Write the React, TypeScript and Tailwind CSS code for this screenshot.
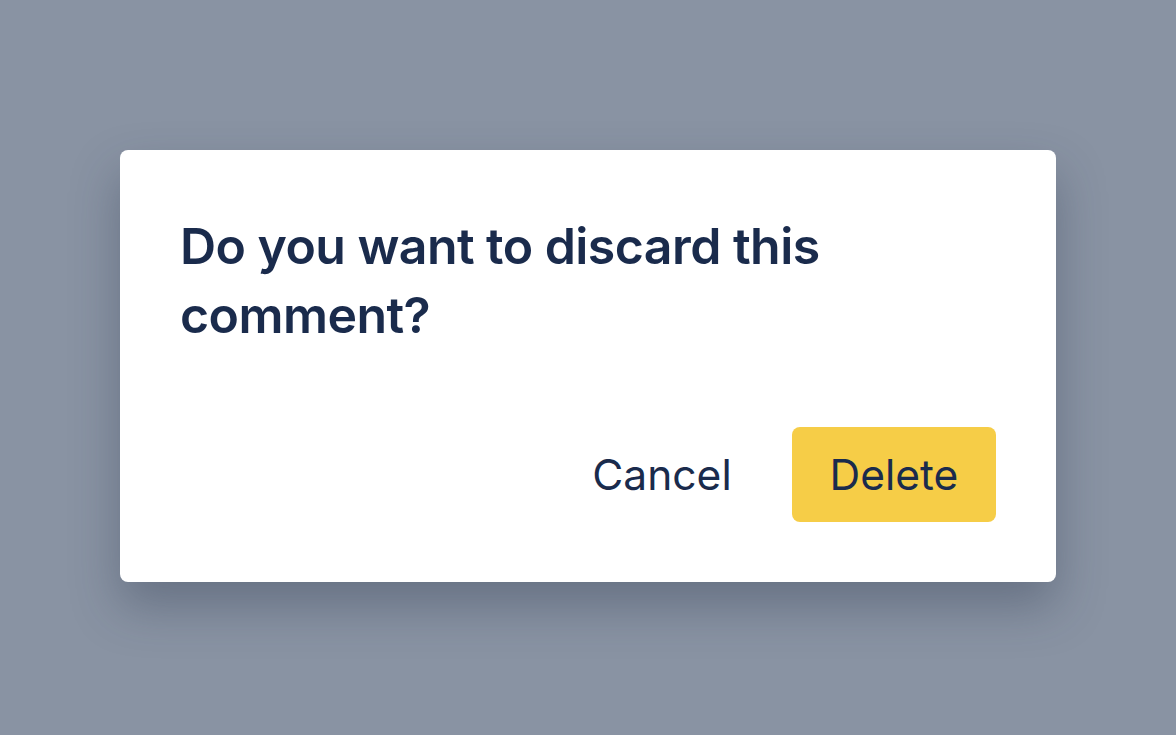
import React from "react";

const App = () => {
  return (
    <div
      className="min-h-screen w-full bg-[#8993a3] flex items-start justify-center pt-[150px]"
      style={{ fontFamily: "Inter, 'Noto Sans', sans-serif" }}
    >
      <div className="w-[936px] bg-white rounded-[8px] p-[60px] shadow-[0_24px_48px_rgba(40,52,75,0.35)]">
        <h1 className="text-[50px] leading-[69px] font-semibold text-[#1a2b4c] pt-[2px] tracking-[-0.55px]">
          Do you want to discard this comment?
        </h1>
        <div className="mt-[77px] flex justify-end items-center gap-[24px]">
          <button className="h-[95px] w-[212px] rounded-[8px] text-[42.5px] text-[#1a2b4c]">
            Cancel
          </button>
          <button className="h-[95px] w-[204px] rounded-[8px] bg-[#f6cd47] text-[42.5px] text-[#1a2b4c]">
            Delete
          </button>
        </div>
      </div>
    </div>
  );
};

export default App;
